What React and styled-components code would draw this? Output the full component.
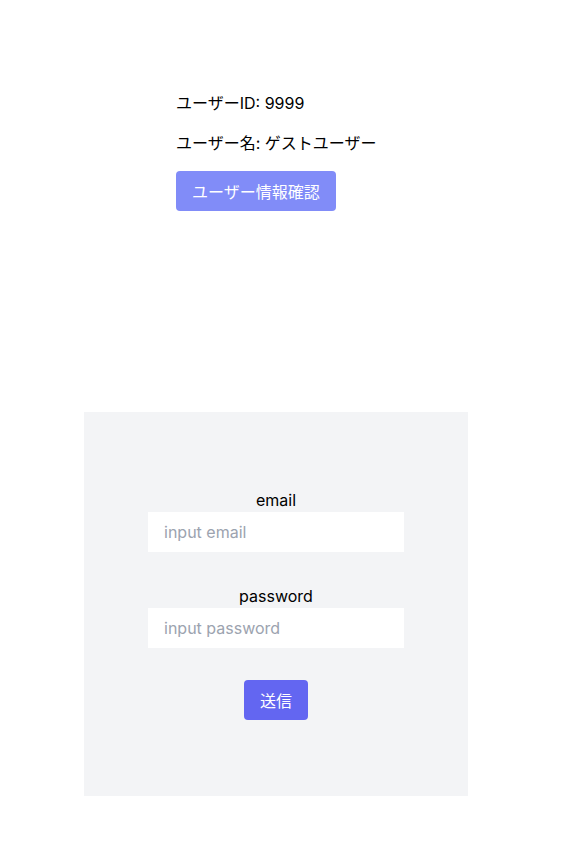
import React from 'react'
import styled, { createGlobalStyle } from 'styled-components'

const GlobalStyle = createGlobalStyle`
  body {
    margin: 0;
    font-family: Inter, 'Noto Sans CJK JP', sans-serif;
    font-size: 16px;
    line-height: 24px;
    color: #000;
    background: #fff;
  }
`

const Page = styled.div`
  display: flex;
  flex-direction: column;
  padding-top: 75px;
`

const UserInfo = styled.section`
  padding-left: 176px;
  display: flex;
  flex-direction: column;
  align-items: flex-start;
`

const InfoLine = styled.p`
  margin: 16px 0 0;
  line-height: 24px;
`

const Button = styled.button`
  margin-top: ${({ $top }) => $top || 0}px;
  height: 40px;
  padding: 0 16px;
  border: none;
  border-radius: 4px;
  background: ${({ $light }) => ($light ? '#818cf8' : '#6366f1')};
  color: #fff;
  font-family: inherit;
  font-size: 16px;
  cursor: pointer;
`

const FormBox = styled.form`
  margin: 201px 0 0 84px;
  width: 384px;
  height: 384px;
  background: #f3f4f6;
  display: flex;
  flex-direction: column;
  align-items: center;
  justify-content: center;
`

const Field = styled.div`
  width: 256px;
  display: flex;
  flex-direction: column;
  margin-bottom: 32px;
`

const Label = styled.label`
  text-align: center;
  line-height: 24px;
`

const Input = styled.input`
  box-sizing: border-box;
  height: 40px;
  width: 100%;
  border: none;
  outline: none;
  padding: 0 16px;
  background: #fff;
  font-family: inherit;
  font-size: 16px;
  color: #111827;

  &::placeholder {
    color: #9ca3af;
  }
`

export default function App() {
  return (
    <>
      <GlobalStyle />
      <Page>
        <UserInfo>
          <InfoLine>ユーザーID: 9999</InfoLine>
          <InfoLine>ユーザー名: ゲストユーザー</InfoLine>
          <Button type="button" $light $top={16}>ユーザー情報確認</Button>
        </UserInfo>
        <FormBox onSubmit={e => e.preventDefault()}>
          <Field>
            <Label htmlFor="email">email</Label>
            <Input id="email" type="email" placeholder="input email" />
          </Field>
          <Field>
            <Label htmlFor="password">password</Label>
            <Input id="password" type="password" placeholder="input password" />
          </Field>
          <Button type="submit">送信</Button>
        </FormBox>
      </Page>
    </>
  )
}
